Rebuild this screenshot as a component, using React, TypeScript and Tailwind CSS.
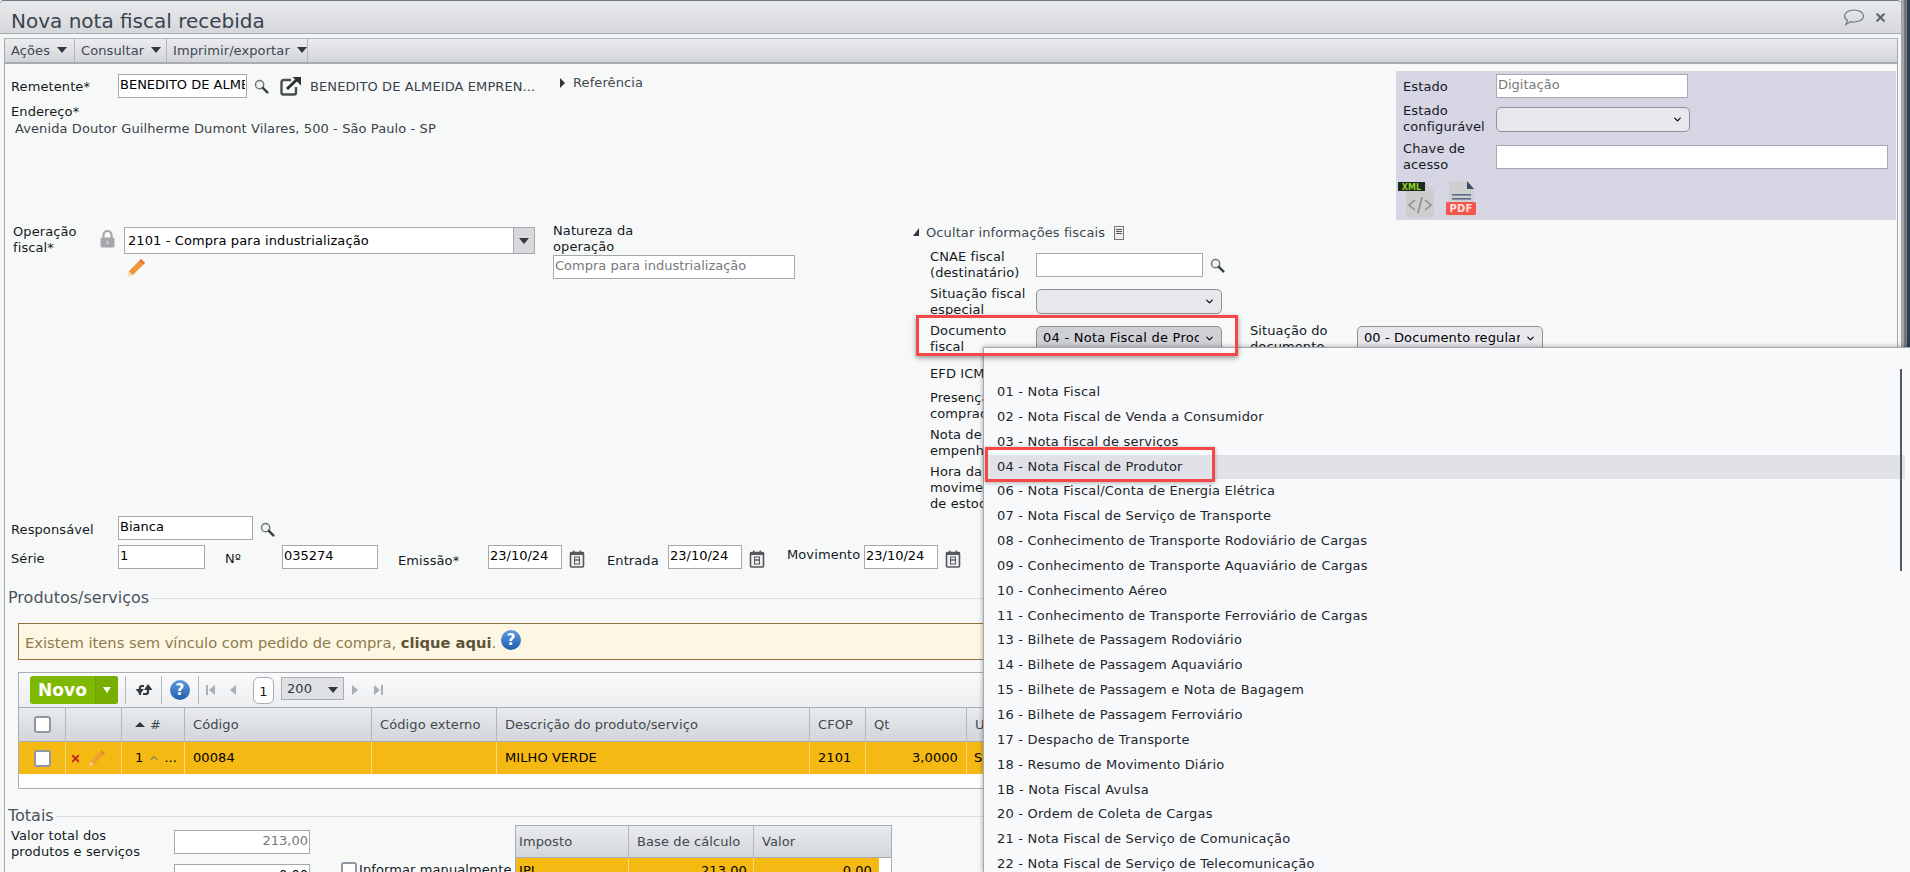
import React from 'react';
import { ChevronDown, ChevronUp, X } from 'lucide-react';

const font = { fontFamily: '"DejaVu Sans", sans-serif' };

const docOptions = [
    '01 - Nota Fiscal',
    '02 - Nota Fiscal de Venda a Consumidor',
    '03 - Nota fiscal de serviços',
    '04 - Nota Fiscal de Produtor',
    '06 - Nota Fiscal/Conta de Energia Elétrica',
    '07 - Nota Fiscal de Serviço de Transporte',
    '08 - Conhecimento de Transporte Rodoviário de Cargas',
    '09 - Conhecimento de Transporte Aquaviário de Cargas',
    '10 - Conhecimento Aéreo',
    '11 - Conhecimento de Transporte Ferroviário de Cargas',
    '13 - Bilhete de Passagem Rodoviário',
    '14 - Bilhete de Passagem Aquaviário',
    '15 - Bilhete de Passagem e Nota de Bagagem',
    '16 - Bilhete de Passagem Ferroviário',
    '17 - Despacho de Transporte',
    '18 - Resumo de Movimento Diário',
    '1B - Nota Fiscal Avulsa',
    '20 - Ordem de Coleta de Cargas',
    '21 - Nota Fiscal de Serviço de Comunicação',
    '22 - Nota Fiscal de Serviço de Telecomunicação',
];

const columns = [
    { title: 'Código', w: 'w-[187px]' },
    { title: 'Código externo', w: 'w-[125px]' },
    { title: 'Descrição do produto/serviço', w: 'w-[313px]' },
    { title: 'CFOP', w: 'w-[56px]' },
    { title: 'Qt', w: 'w-[101px]' },
    { title: 'U', w: 'w-[100px]' },
];

const Field = ({ value, className, muted, right }: { value: string; className: string; muted?: boolean; right?: boolean }) => (
    <input
        readOnly
        value={value}
        className={`h-[24px] bg-white border border-[#a5a9ae] px-[1px] pb-[3px] text-[13px] tracking-normal outline-none ${muted ? 'text-[#77787c]' : 'text-black'} ${right ? 'text-right' : ''} ${className}`}
    />
);

const Combo = ({ value, className, dark }: { value?: string; className: string; dark?: boolean }) => (
    <div className={`h-[25px] flex items-center justify-between pl-[6px] pr-[6px] rounded-[5px] border border-[#8f9098] text-[13px] text-black overflow-hidden ${dark ? 'bg-[#cfd0d6] tracking-[0.25px]' : 'bg-[#e8e8ec] tracking-[0.1px]'} ${className}`}>
        <span className="overflow-hidden whitespace-nowrap">{value}</span>
        <ChevronDown className="w-[11px] h-[11px] shrink-0 ml-[5px]" strokeWidth={2.5} />
    </div>
);

const Magnifier = ({ className = '' }: { className?: string }) => (
    <svg viewBox="0 0 16 16" className={`w-[15px] h-[15px] shrink-0 ${className}`}>
        <circle cx="6" cy="6" r="4.4" fill="#f2f4f4" stroke="#6d7277" strokeWidth="1.5" />
        <path d="M9.4 9.4 L14.2 14.2" stroke="#3f4448" strokeWidth="2.8" strokeLinecap="round" />
    </svg>
);

const Pencil = ({ className = '' }: { className?: string }) => (
    <svg viewBox="0 0 18 18" className={className}>
        <path d="M13.5 1 L17 4.5 L6 15.5 L2.5 12 Z" fill="#f0953a" />
        <path d="M13.5 1 L17 4.5 L15.5 6 L12 2.5 Z" fill="#e8762a" />
        <path d="M2.5 12 L6 15.5 L1 17 Z" fill="#f5d9b0" />
    </svg>
);

const Calendar = () => (
    <svg viewBox="0 0 16 18" className="w-[16px] h-[18px] shrink-0">
        <rect x="1.5" y="2.5" width="13" height="14.5" rx="1" fill="#f0f0f0" stroke="#55595e" strokeWidth="1.6" />
        <rect x="1" y="2" width="14" height="3" fill="#55595e" />
        <rect x="4" y="0.5" width="1.5" height="3" fill="#55595e" />
        <rect x="10.5" y="0.5" width="1.5" height="3" fill="#55595e" />
        <rect x="5.5" y="7" width="5" height="3" fill="none" stroke="#55595e" />
        <rect x="5.5" y="10" width="5" height="4" fill="none" stroke="#55595e" />
    </svg>
);

const HelpDot = ({ size }: { size: string }) => (
    <span className={`${size} rounded-full bg-gradient-to-b from-[#5f9be0] to-[#1f5fae] text-white font-bold flex items-center justify-center text-[15px] shrink-0`}>?</span>
);

const Check = ({ className }: { className: string }) => (
    <span className={`block bg-white rounded-[3px] border-2 border-[#9097a3] ${className}`} />
);

const Tri = ({ className = '' }: { className?: string }) => (
    <span className={`block w-0 h-0 border-x-[5px] border-x-transparent border-t-[6px] border-t-[#33383f] ${className}`} />
);

const Pager = ({ d, bar }: { d: string; bar?: boolean }) => (
    <svg viewBox={bar ? '0 0 10 12' : '0 0 7 12'} className={`h-[12px] ${bar ? 'w-[10px]' : 'w-[7px]'}`}>
        <path d={d} fill="#a9afb6" />
    </svg>
);

export default function App() {
    return (
        <div style={font} className="relative w-[1910px] h-[872px] overflow-hidden bg-[#f4f6f6] text-[13px] leading-[16px] tracking-[0.1px] text-[#15191e]">
            {/* Window edge at right */}
            <div className="absolute right-0 top-0 bottom-0 w-[9px] flex">
                <div className="w-[3px] bg-[#a3a5a8]" />
                <div className="w-[3px] bg-[#74777b]" />
                <div className="w-[3px] bg-[#2b3f57]" />
            </div>

            <div className="w-[1901px] h-full">
                {/* Title */}
                <div className="h-[34px] flex items-center justify-between pl-[11px] pr-[14px] rounded-t-[4px] border-t border-t-[#6f7a86] border-b border-b-[#a5aab0] bg-gradient-to-b from-[#e9eaec] to-[#d5d7da]">
                    <h1 className="text-[20px] leading-[26px] tracking-normal text-[#3a4450] mt-[7px]">Nova nota fiscal recebida</h1>
                    <div className="flex items-center gap-[9px] text-[#5d6670]">
                        <svg viewBox="0 0 22 18" className="w-[22px] h-[18px]">
                            <path d="M11 2 C16.5 2 20.5 4.6 20.5 8 C20.5 11.4 16.5 14 11 14 C9.6 14 8.6 13.9 7.6 13.6 L3 16.5 L4.4 12.3 C2.5 11.2 1.5 9.7 1.5 8 C1.5 4.6 5.5 2 11 2 Z" fill="none" stroke="#6d757d" strokeWidth="1.2" />
                        </svg>
                        <X className="w-[13px] h-[13px]" strokeWidth={4} />
                    </div>
                </div>

                {/* Body of the form, framed */}
                <div className="mt-[4px] ml-[4px] w-[1894px] h-[834px] border-x border-[#a5aab0] bg-[#f7f9f9]">
                    {/* Toolbar */}
                    <div className="h-[26px] flex border-t border-[#b3b7bc] border-b-2 border-b-[#a6acb2] bg-gradient-to-b from-[#ebecee] to-[#d2d4d8] text-[#3f4852]">
                        <div className="flex items-center gap-[7px] pl-[6px] w-[70px] border-r border-[#b3b7bc]"><span>Ações</span><Tri className="-mt-[2px]" /></div>
                        <div className="flex items-center gap-[7px] pl-[6px] w-[92px] border-r border-[#b3b7bc]"><span>Consultar</span><Tri className="-mt-[2px]" /></div>
                        <div className="flex items-center gap-[7px] pl-[6px] w-[141px] border-r border-[#b3b7bc]"><span>Imprimir/exportar</span><Tri className="-mt-[2px]" /></div>
                    </div>

                    {/* Remetente + estado */}
                    <div className="flex h-[161px]">
                        <div className="w-[1391px] pl-[6px]">
                            <div className="flex items-center h-[24px] mt-[10px]">
                                <span className="w-[107px] mt-[2px]">Remetente*</span>
                                <Field value="BENEDITO DE ALMEIDA EMPRENDIMENTOS" className="w-[129px]" />
                                <Magnifier className="ml-[7px]" />
                                <svg viewBox="0 0 22 20" className="ml-[11px] w-[22px] h-[20px] shrink-0">
                                    <path d="M11 4 H3.5 A2 2 0 0 0 1.5 6 V16.5 A2 2 0 0 0 3.5 18.5 H14 A2 2 0 0 0 16 16.5 V11" fill="none" stroke="#4a4e53" strokeWidth="2.4" />
                                    <path d="M7 13 L17 3.5" stroke="#2e3237" strokeWidth="3" />
                                    <path d="M12.5 1 H21 V9.5 Z" fill="#2e3237" />
                                </svg>
                                <span className="ml-[8px] w-[229px] text-[#3a4149] whitespace-nowrap mt-[2px]">BENEDITO DE ALMEIDA EMPREN...</span>
                                <span className="ml-[21px] -mt-[7px] w-0 h-0 border-y-[5px] border-y-transparent border-l-[5px] border-l-[#33383f]" />
                                <span className="ml-[8px] -mt-[7px] text-[#3f4852]">Referência</span>
                            </div>
                            <div className="mt-[6px]">Endereço*</div>
                            <div className="ml-[4px] mt-[1px] text-[#3a4149]">Avenida Doutor Guilherme Dumont Vilares, 500 - São Paulo - SP</div>
                        </div>
                        <div className="w-[500px] h-[149px] mt-[7px] bg-[#d5d5e3] pl-[7px] pr-[8px] pt-[3px]">
                            <div className="flex items-center h-[24px]">
                                <span className="w-[93px] mt-[2px]">Estado</span>
                                <Field value="Digitação" muted className="w-[192px]" />
                            </div>
                            <div className="flex items-center h-[32px] mt-[5px]">
                                <span className="w-[93px]">Estado configurável</span>
                                <Combo className="w-[194px]" />
                            </div>
                            <div className="flex items-center h-[32px] mt-[6px]">
                                <span className="w-[93px]">Chave de acesso</span>
                                <Field value="" className="w-[392px]" />
                            </div>
                            <div className="flex -ml-[5px] mt-[7px] gap-[12px]">
                                <svg viewBox="0 0 36 37" className="w-[36px] h-[37px]">
                                    <path d="M8 3 H28 L36 11 V37 H8 Z" fill="#cdcdcf" />
                                    <rect x="0" y="2" width="27" height="9" fill="#1d2a1d" />
                                    <path d="M17 20 L11 25 L17 30 M27 20 L33 25 L27 30 M24 17 L20 33" fill="none" stroke="#8a8b8e" strokeWidth="1.6" />
                                    <text x="13.5" y="9.5" textAnchor="middle" fontSize="8" fontWeight="700" fill="#8fd321">XML</text>
                                </svg>
                                <svg viewBox="0 0 31 38" className="w-[31px] h-[38px]">
                                    <path d="M3 1 H21 L28 9 V36 H3 Z" fill="#cfcfd2" />
                                    <path d="M21 1 L28 9 H21 Z" fill="#3f4a63" />
                                    <rect x="6" y="14" width="19" height="1.6" fill="#5a6a85" />
                                    <rect x="6" y="18" width="19" height="1.6" fill="#5a6a85" />
                                    <rect x="0" y="22" width="30" height="13" rx="1.5" fill="#f4554d" />
                                    <text x="15" y="32" textAnchor="middle" fontSize="10" fontWeight="700" fill="#fde0dd">PDF</text>
                                </svg>
                            </div>
                        </div>
                    </div>

                    {/* Operacao + informacoes fiscais */}
                    <div className="flex h-[287px]">
                        <div className="w-[119px] pl-[8px] flex">
                            <span className="w-[87px] -mt-[1px]">Operação fiscal*</span>
                            <svg viewBox="0 0 15 19" className="mt-[4px] w-[15px] h-[19px] shrink-0">
                                <path d="M3.5 9 V6 A4 4 0 0 1 11.5 6 V9" fill="none" stroke="#a5a7aa" strokeWidth="2.2" />
                                <rect x="0.5" y="8.5" width="14" height="10" rx="1.5" fill="#a5a7aa" />
                                <rect x="6.5" y="11.5" width="2" height="4" fill="#c9cacc" />
                            </svg>
                        </div>
                        <div className="w-[429px] pt-[2px]">
                            <div className="w-[411px] h-[27px] flex bg-white border border-[#a5a9ae]">
                                <span className="flex-1 pl-[3px] leading-[25px] text-black">2101 - Compra para industrialização</span>
                                <span className="w-[21px] bg-[#d6d8dc] border-l border-[#a5a9ae] flex items-center justify-center"><Tri /></span>
                            </div>
                            <Pencil className="w-[20px] h-[20px] ml-[2px] mt-[4px]" />
                        </div>
                        <div className="w-[360px]">
                            <div className="w-[100px] -mt-[2px]">Natureza da operação</div>
                            <Field value="Compra para industrialização" muted className="w-[242px]" />
                        </div>
                        <div className="w-[983px]">
                            <div className="flex items-center h-[16px] text-[#3f4852]">
                                <span className="w-0 h-0 -mt-[2px] border-b-[8px] border-b-[#33383f] border-l-[6px] border-l-transparent" />
                                <span className="ml-[7px]">Ocultar informações fiscais</span>
                                <span className="ml-[9px] w-[10px] h-[14px] border border-[#777] bg-[#eee] flex flex-col gap-[1px] px-[1px] py-[2px]">
                                    <i className="block h-px bg-[#555]" /><i className="block h-px bg-[#555]" /><i className="block h-px bg-[#555]" />
                                </span>
                            </div>
                            <div className="ml-[17px]">
                                <div className="flex items-center h-[32px] mt-[8px]">
                                    <span className="w-[106px]">CNAE fiscal (destinatário)</span>
                                    <Field value="" className="w-[167px] -mt-[1px]" />
                                    <Magnifier className="ml-[7px]" />
                                </div>
                                <div className="flex items-center h-[32px] mt-[5px]">
                                    <span className="w-[106px] pr-[8px]">Situação fiscal especial</span>
                                    <Combo className="w-[186px] -mt-[2px]" />
                                </div>
                                <div className="flex items-center h-[32px] mt-[5px]">
                                    <span className="w-[106px] pr-[20px]">Documento fiscal</span>
                                    <Combo value="04 - Nota Fiscal de Produtor" dark className="w-[186px] -mt-[2px]" />
                                    <span className="ml-[28px] w-[107px] pr-[10px]">Situação do documento</span>
                                    <Combo value="00 - Documento regular" className="w-[186px] -mt-[2px]" />
                                </div>
                                <div className="mt-[11px]">EFD ICMS/IPI</div>
                                <div className="mt-[8px] w-[100px]">Presença do comprador</div>
                                <div className="mt-[5px] w-[100px]">Nota de empenho</div>
                                <div className="mt-[5px] w-[110px]">Hora da movimentação de estoque</div>
                            </div>
                        </div>
                    </div>

                    {/* Responsavel / datas */}
                    <div className="flex items-center h-[24px] mt-[4px] pl-[6px]">
                        <span className="w-[107px] mt-[4px]">Responsável</span>
                        <Field value="Bianca" className="w-[135px]" />
                        <Magnifier className="ml-[7px] mt-[3px]" />
                    </div>
                    <div className="flex items-center h-[24px] mt-[5px] pl-[6px]">
                        <span className="w-[107px] mt-[4px]">Série</span>
                        <Field value="1" className="w-[87px]" />
                        <span className="ml-[20px] w-[57px] mt-[3px]">Nº</span>
                        <Field value="035274" className="w-[96px]" />
                        <span className="ml-[20px] w-[90px] mt-[7px]">Emissão*</span>
                        <Field value="23/10/24" className="w-[74px]" />
                        <span className="ml-[7px] mt-[3px]"><Calendar /></span>
                        <span className="ml-[22px] w-[61px] mt-[7px]">Entrada</span>
                        <Field value="23/10/24" className="w-[74px]" />
                        <span className="ml-[7px] mt-[3px]"><Calendar /></span>
                        <span className="ml-[22px] w-[77px] -mt-[4px]">Movimento</span>
                        <Field value="23/10/24" className="w-[74px]" />
                        <span className="ml-[7px] mt-[3px]"><Calendar /></span>
                    </div>

                    {/* Produtos */}
                    <div className="flex items-center h-[20px] mt-[19px] pl-[3px]">
                        <span className="text-[16px] tracking-normal text-[#4a535c]">Produtos/serviços</span>
                        <span className="flex-1 h-px bg-[#dcdfe0] ml-[2px]" />
                    </div>
                    <div className="ml-[13px] mt-[15px] h-[37px] flex items-center pl-[6px] border border-r-0 border-[#93713a] bg-[#fdf6e3] text-[14.7px] tracking-normal text-[#8c7c4d]">
                        <span className="mt-[2px]">Existem itens sem vínculo com pedido de compra, <b className="text-[#5d533a]">clique aqui</b>.</span>
                        <HelpDot size="ml-[5px] -mt-[4px] w-[20px] h-[20px]" />
                    </div>

                    <div className="ml-[13px] mt-[12px] h-[117px] border border-[#a8adb5] bg-white">
                        <div className="h-[35px] flex items-center bg-gradient-to-b from-[#fafafa] to-[#eceef0] border-b border-[#a8adb5]">
                            <div className="ml-[11px] w-[88px] h-[28px] flex rounded-[3px] overflow-hidden bg-[#7fb800] text-white font-bold">
                                <span className="w-[65px] text-center text-[17px] leading-[28px]">Novo</span>
                                <span className="flex-1 bg-[#78ae00] border-l border-[#6ea000] flex items-center justify-center"><span className="w-0 h-0 border-x-[4px] border-x-transparent border-t-[6px] border-t-white" /></span>
                            </div>
                            <span className="ml-[7px] h-[28px] w-px bg-[#b5b9be]" />
                            <svg viewBox="0 0 18 14" className="ml-[9px] w-[18px] h-[14px]">
                                <path d="M9 3 H7 A2 2 0 0 0 5 5 V12" fill="none" stroke="#33383f" strokeWidth="2.2" />
                                <path d="M0.5 7 H9 L5 12.5 Z" fill="#33383f" transform="translate(0 -1)" />
                                <path d="M8 11 H11 A2 2 0 0 0 13 9 V3" fill="none" stroke="#33383f" strokeWidth="2.2" />
                                <path d="M9 7 H17.5 L13 1 Z" fill="#33383f" />
                            </svg>
                            <span className="ml-[8px] h-[28px] w-px bg-[#b5b9be]" />
                            <HelpDot size="ml-[8px] w-[20px] h-[20px]" />
                            <span className="ml-[8px] h-[28px] w-px bg-[#b5b9be]" />
                            <span className="ml-[7px]"><Pager bar d="M0 1H2V11H0ZM9 1V11L3 6Z" /></span>
                            <span className="ml-[14px]"><Pager d="M6 1V11L0 6Z" /></span>
                            <span className="ml-[16px] w-[21px] h-[27px] rounded-[6px] border border-[#a8adb5] bg-white text-center leading-[27px]">1</span>
                            <span className="ml-[7px] w-[63px] h-[23px] flex items-center justify-between pl-[5px] pr-[5px] -mt-[3px] bg-[#dfe1e4] border border-[#a8adb5] text-[#33383f]">200<Tri className="mt-[3px]" /></span>
                            <span className="ml-[8px]"><Pager d="M0 1V11L6 6Z" /></span>
                            <span className="ml-[15px]"><Pager bar d="M0 1V11L6 6ZM7 1H9V11H7Z" /></span>
                        </div>
                        <div className="h-[34px] flex bg-gradient-to-b from-[#e9ebed] to-[#d3d6da] border-b border-[#a8adb5] text-[#3f4852] leading-[33px]">
                            <div className="w-[47px] border-r border-[#b3b7bc] flex items-center justify-center"><Check className="w-[17px] h-[17px]" /></div>
                            <div className="w-[56px] border-r border-[#b3b7bc]" />
                            <div className="w-[63px] border-r border-[#b3b7bc] flex items-center gap-[5px] pl-[13px]"><span className="block w-0 h-0 border-x-[5px] border-x-transparent border-b-[5px] border-b-[#33383f]" /><span>#</span></div>
                            {columns.map(col => (
                                <div key={col.title} className={`${col.w} border-r border-[#b3b7bc] pl-[8px]`}>{col.title}</div>
                            ))}
                        </div>
                        <div className="h-[32px] flex bg-[#f5b914] text-black leading-[32px]">
                            <div className="w-[47px] border-r border-[#f9da80] flex items-center justify-center"><Check className="w-[17px] h-[17px]" /></div>
                            <div className="w-[56px] border-r border-[#f9da80] flex items-center pl-[4px] gap-[7px]">
                                <X className="w-[11px] h-[11px] text-[#c8281e]" strokeWidth={4} />
                                <Pencil className="w-[18px] h-[18px] opacity-70" />
                            </div>
                            <div className="w-[63px] border-r border-[#f9da80] flex items-center pl-[13px]">
                                1<ChevronUp className="ml-[5px] w-[12px] h-[12px] text-[#9a8c55]" strokeWidth={3} /><span className="ml-[4px]">...</span>
                            </div>
                            <div className="w-[187px] border-r border-[#f9da80] pl-[8px]">00084</div>
                            <div className="w-[125px] border-r border-[#f9da80] pl-[8px]" />
                            <div className="w-[313px] border-r border-[#f9da80] pl-[8px]">MILHO VERDE</div>
                            <div className="w-[56px] border-r border-[#f9da80] pl-[8px]">2101</div>
                            <div className="w-[101px] border-r border-[#f9da80] text-right pr-[8px]">3,0000</div>
                            <div className="w-[100px] pl-[7px]">S</div>
                        </div>
                    </div>

                    {/* Totais */}
                    <div className="flex items-center h-[22px] mt-[16px] pl-[3px]">
                        <span className="text-[16px] tracking-normal text-[#4a535c]">Totais</span>
                        <span className="flex-1 h-px bg-[#dcdfe0] ml-[2px]" />
                    </div>
                    <div className="flex pl-[6px]">
                        <div className="w-[163px]">
                            <div className="w-[150px] mt-[1px]">Valor total dos produtos e serviços</div>
                        </div>
                        <div className="w-[136px] flex flex-col gap-[10px] mt-[3px]">
                            <Field value="213,00" muted right className="w-[136px]" />
                            <Field value="0,00" right className="w-[136px]" />
                        </div>
                        <div className="w-[205px] relative">
                            <span className="absolute left-[31px] top-[35px] flex items-center gap-[2px] whitespace-nowrap"><Check className="w-[16px] h-[16px]" />Informar manualmente</span>
                        </div>
                        <div className="w-[377px] h-[60px] border border-[#a8adb5] -mt-[2px] bg-white">
                            <div className="h-[32px] flex bg-gradient-to-b from-[#e9ebed] to-[#d3d6da] border-b border-[#a8adb5] text-[#3f4852] leading-[31px]">
                                <div className="w-[113px] border-r border-[#b3b7bc] pl-[3px]">Imposto</div>
                                <div className="w-[125px] border-r border-[#b3b7bc] pl-[8px]">Base de cálculo</div>
                                <div className="pl-[8px]">Valor</div>
                            </div>
                            <div className="h-[28px] w-[363px] flex bg-[#f5b914] text-black leading-[26px]">
                                <div className="w-[113px] border-r border-[#f9da80] pl-[3px]">IPI</div>
                                <div className="w-[125px] border-r border-[#f9da80] pr-[6px] text-right">213,00</div>
                                <div className="flex-1 pr-[7px] text-right">0,00</div>
                            </div>
                        </div>
                    </div>
                </div>
            </div>

            {/* Dropdown list opened over the form */}
            <div className="absolute left-[983px] top-[347px] right-0 bottom-0 bg-[#f8f9fb] border-l border-t border-[#a5a9ae] shadow-[0_0_5px_rgba(0,0,0,0.35)] pt-[32px] pl-[4px] pr-[5px] tracking-[0.2px] text-[#22262c]">
                <div className="absolute right-[8px] top-[21px] h-[202px] w-[2px] bg-[#555a60]" />
                {docOptions.map(option => (
                    <div key={option} className={`h-[24.85px] leading-[24.85px] pl-[9px] ${option.startsWith('04') ? 'bg-[#e1e1e8]' : ''}`}>{option}</div>
                ))}
            </div>

            {/* Red annotation boxes */}
            <div className="absolute left-[916px] top-[315px] w-[322px] h-[41px] border-[3px] border-[#f44848] shadow-[0_2px_5px_rgba(0,0,0,0.4)]" />
            <div className="absolute left-[985px] top-[447px] w-[230px] h-[35px] border-[3px] border-[#f44848] shadow-[0_1px_4px_rgba(0,0,0,0.3)]" />
        </div>
    );
}
